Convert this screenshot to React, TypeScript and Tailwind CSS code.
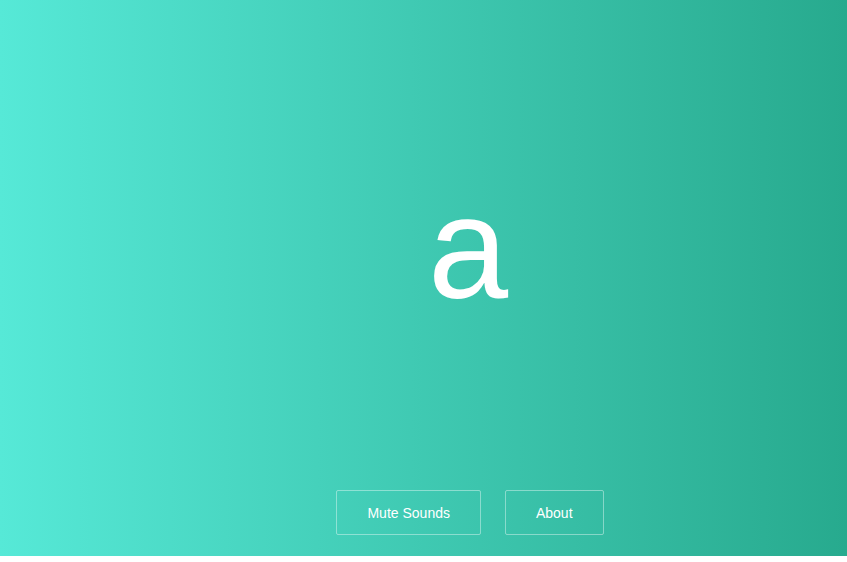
export default function App() {
  return (
    <div className="h-[556px] flex flex-col bg-gradient-to-r from-[#56e9d7] to-[#27aa8e] pl-[93px] text-white font-['Liberation_Sans',Arial,sans-serif]">
      <div className="flex-1 flex items-center justify-center pt-[7px]">
        <div className="text-[144px] leading-none mr-[4px]">a</div>
      </div>
      <div className="flex justify-center gap-6 pb-[21px]">
        <button className="h-[45px] px-[30px] text-sm border border-white/40 rounded-[2px]">
          Mute Sounds
        </button>
        <button className="h-[45px] px-[30px] text-sm border border-white/40 rounded-[2px]">
          About
        </button>
      </div>
    </div>
  );
}
